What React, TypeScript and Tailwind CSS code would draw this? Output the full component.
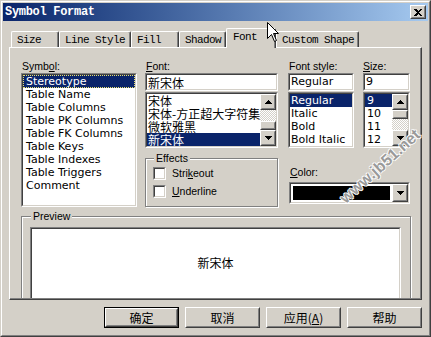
import React from "react"

const sans = "font-['Liberation_Sans',Arial,sans-serif] text-[10.5px] text-black"
const listFont = "font-['DejaVu_Sans',Verdana,sans-serif] text-[11px]"
const cjk = "font-['Noto_Sans_CJK_SC',sans-serif] text-[12px]"
const mono = "font-['Liberation_Mono',monospace]"

type BoxProps = { className?: string; inner?: string; children?: React.ReactNode }

function Sunken({ className = "", inner = "", children }: BoxProps) {
  return (
    <div className={`border border-t-[#808080] border-l-[#808080] border-r-white border-b-white ${className}`}>
      <div className={`h-full w-full border border-t-[#404040] border-l-[#404040] border-r-[#d4d0c8] border-b-[#d4d0c8] ${inner}`}>
        {children}
      </div>
    </div>
  )
}

function Raised({ className = "", inner = "", children }: BoxProps) {
  return (
    <div className={`border border-t-white border-l-white border-r-[#404040] border-b-[#404040] ${className}`}>
      <div className={`h-full w-full border border-t-[#d4d0c8] border-l-[#d4d0c8] border-r-[#808080] border-b-[#808080] ${inner}`}>
        {children}
      </div>
    </div>
  )
}

function Arrow({ up = false }: { up?: boolean }) {
  return (
    <svg width="7" height="4" viewBox="0 0 7 4" shapeRendering="crispEdges">
      {up ? (
        <g fill="#000">
          <rect x="3" y="0" width="1" height="1" />
          <rect x="2" y="1" width="3" height="1" />
          <rect x="1" y="2" width="5" height="1" />
          <rect x="0" y="3" width="7" height="1" />
        </g>
      ) : (
        <g fill="#000">
          <rect x="0" y="0" width="7" height="1" />
          <rect x="1" y="1" width="5" height="1" />
          <rect x="2" y="2" width="3" height="1" />
          <rect x="3" y="3" width="1" height="1" />
        </g>
      )}
    </svg>
  )
}

function ScrollBtn({ up = false }: { up?: boolean }) {
  return (
    <Raised className="h-[16px] w-[16px] bg-[#d4d0c8]" inner="flex items-center justify-center">
      <Arrow up={up} />
    </Raised>
  )
}

const checker =
  "bg-[image:repeating-conic-gradient(#d4d0c8_0%_25%,#ffffff_0%_50%)] [background-size:2px_2px]"

function Track({ thumbFirst, thumbH, gapH }: { thumbFirst: boolean; thumbH: string; gapH: string }) {
  const thumb = <Raised className={`${thumbH} w-[16px] bg-[#d4d0c8]`} />
  const gap = <div className={`${gapH} w-[16px] ${checker}`} />
  return (
    <div className="flex h-full w-[16px] flex-col">
      <ScrollBtn up />
      {thumbFirst ? thumb : gap}
      {thumbFirst ? gap : thumb}
      <div className="flex-1" />
      <ScrollBtn />
    </div>
  )
}

function Underline({ text, at }: { text: string; at: number }) {
  return (
    <>
      {text.slice(0, at)}
      <span className="underline underline-offset-[1px]">{text[at]}</span>
      {text.slice(at + 1)}
    </>
  )
}

const symbols = [
  "Stereotype",
  "Table Name",
  "Table Columns",
  "Table PK Columns",
  "Table FK Columns",
  "Table Keys",
  "Table Indexes",
  "Table Triggers",
  "Comment",
]

const fonts = ["宋体", "宋体-方正超大字符集", "微软雅黑", "新宋体"]
const styles = ["Regular", "Italic", "Bold", "Bold Italic"]
const sizes = ["9", "10", "11", "12"]

const tabs = [
  { label: "Size", w: "w-[48px]" },
  { label: "Line Style", w: "w-[72px]" },
  { label: "Fill", w: "w-[48px]" },
  { label: "Shadow", w: "w-[47px]" },
  { label: "Font", w: "w-[50px]", active: true },
  { label: "Custom Shape", w: "w-[83px]" },
]

const etched = "border border-[#808080] shadow-[1px_1px_0_#ffffff,inset_1px_1px_0_#ffffff]"

export default function App() {
  return (
    <div className="relative h-[337px] w-[431px] overflow-hidden bg-[#d4d0c8]">
      <div className="h-full w-full border border-t-[#d4d0c8] border-l-[#d4d0c8] border-r-[#404040] border-b-[#404040]">
        <div className="h-full w-full border border-t-white border-l-white border-r-[#808080] border-b-[#808080] p-px">
          {/* title bar */}
          <div className="flex h-[18px] items-start justify-between bg-linear-to-r from-[#0a246a] to-[#a6caf0]">
            <span className={`${mono} pl-[2px] pt-[2px] text-[12px] leading-[14px] font-bold tracking-[-0.3px] text-white`}>
              Symbol Format
            </span>
            <Raised className="mt-[2px] mr-[2px] h-[14px] w-[16px] bg-[#d4d0c8]" inner="flex items-center justify-center">
              <svg width="8" height="7" viewBox="0 0 8 7" shapeRendering="crispEdges">
                <path d="M0 0h2l2 2 2-2h2L5 3.5 8 7H6L4 5 2 7H0l3-3.5z" fill="#000" />
              </svg>
            </Raised>
          </div>

          {/* tabs */}
          <div className={`${mono} mt-[7px] ml-[8px] flex h-[19px] items-end text-[11px] tracking-[-0.6px] text-black`}>
            {tabs.map((t) =>
              t.active ? (
                <div
                  key={t.label}
                  className={`${t.w} relative z-10 -mb-px h-[20px] rounded-t-[2px] border-t border-l border-r border-t-white border-l-white border-r-[#404040] bg-[#d4d0c8] pl-[6px] leading-[16px] shadow-[inset_-1px_0_#808080]`}
                >
                  {t.label}
                </div>
              ) : (
                <div
                  key={t.label}
                  className={`${t.w} h-[16px] rounded-t-[2px] border-t border-l border-r border-t-white border-l-white border-r-[#404040] pl-[5px] leading-[16px] shadow-[inset_-1px_0_#808080]`}
                >
                  {t.label}
                </div>
              )
            )}
          </div>

          {/* panel */}
          <div className="ml-[6px] h-[253px] w-[413px] border border-t-white border-l-white border-r-[#404040] border-b-[#404040]">
            <div className="h-full w-full overflow-hidden border-r border-b border-[#808080]">
              <div className="flex pt-[11px] pl-[11px]">
                {/* symbol */}
                <div className="w-[116px]">
                  <div className={`${sans} h-[14px] pl-px leading-[14px]`}>
                    <Underline text="Symbol:" at={4} />
                  </div>
                  <Sunken className="h-[134px] w-full" inner="bg-white">
                    {symbols.map((s, i) => (
                      <div
                        key={s}
                        className={`${listFont} h-[13px] pl-[2px] leading-[12px] ${
                          i === 0
                            ? "border border-dotted border-[#e8e070] bg-[#0a246a] text-white"
                            : "border border-transparent text-black"
                        }`}
                      >
                        {s}
                      </div>
                    ))}
                  </Sunken>
                </div>

                {/* font */}
                <div className="ml-[8px] w-[133px]">
                  <div className={`${sans} h-[14px] pl-px leading-[14px]`}>
                    <Underline text="Font:" at={0} />
                  </div>
                  <Sunken className="h-[18px] w-full" inner={`bg-white ${cjk} pl-px leading-[15px] text-black`}>
                    新宋体
                  </Sunken>
                  <Sunken className="mt-px h-[56px] w-full" inner="flex bg-white">
                    <div className="min-w-0 flex-1">
                      {fonts.map((f, i) => (
                        <div
                          key={f}
                          className={`${cjk} h-[13px] overflow-hidden pl-px leading-[13px] whitespace-nowrap ${
                            i === 3 ? "bg-[#0a246a] text-white" : "text-black"
                          }`}
                        >
                          {f}
                        </div>
                      ))}
                    </div>
                    <Track thumbFirst={false} thumbH="h-[9px]" gapH="h-[11px]" />
                  </Sunken>

                  <div className={`${etched} relative mt-[10px] h-[49px] w-full`}>
                    <span className={`${sans} absolute -top-[7px] left-[8px] bg-[#d4d0c8] px-[2px] leading-[12px]`}>
                      Effects
                    </span>
                    <div className="flex items-center pt-[8px] pl-[7px]">
                      <Sunken className="h-[13px] w-[13px]" inner="bg-white" />
                      <span className={`${sans} ml-[6px] leading-[13px]`}>
                        <Underline text="Strikeout" at={4} />
                      </span>
                    </div>
                    <div className="mt-[5px] flex items-center pl-[7px]">
                      <Sunken className="h-[13px] w-[13px]" inner="bg-white" />
                      <span className={`${sans} ml-[6px] leading-[13px]`}>
                        <Underline text="Underline" at={0} />
                      </span>
                    </div>
                  </div>
                </div>

                {/* style / size / color */}
                <div className="ml-[10px] w-[122px]">
                  <div className="flex">
                    <div className="w-[66px]">
                      <div className={`${sans} h-[14px] pl-px leading-[14px]`}>Font style:</div>
                      <Sunken className="h-[18px] w-full" inner={`bg-white ${listFont} pl-[1px] leading-[14px] text-black`}>
                        Regular
                      </Sunken>
                      <Sunken className="mt-px h-[56px] w-full" inner="bg-white">
                        {styles.map((s, i) => (
                          <div
                            key={s}
                            className={`${listFont} h-[13px] pl-px leading-[13px] whitespace-nowrap ${
                              i === 0 ? "bg-[#0a246a] text-white" : "text-black"
                            }`}
                          >
                            {s}
                          </div>
                        ))}
                      </Sunken>
                    </div>
                    <div className="ml-[9px] w-[47px]">
                      <div className={`${sans} h-[14px] leading-[14px]`}>
                        <Underline text="Size:" at={0} />
                      </div>
                      <Sunken className="h-[18px] w-full" inner={`bg-white ${listFont} pl-[1px] leading-[14px] text-black`}>
                        9
                      </Sunken>
                      <Sunken className="mt-px h-[56px] w-full" inner="flex bg-white">
                        <div className="min-w-0 flex-1">
                          {sizes.map((s, i) => (
                            <div
                              key={s}
                              className={`${listFont} h-[13px] pl-[2px] leading-[13px] ${
                                i === 0 ? "bg-[#0a246a] text-white" : "text-black"
                              }`}
                            >
                              {s}
                            </div>
                          ))}
                        </div>
                        <Track thumbFirst thumbH="h-[9px]" gapH="h-[11px]" />
                      </Sunken>
                    </div>
                  </div>

                  <div className={`${sans} mt-[17px] h-[14px] pl-[2px] leading-[14px]`}>
                    <Underline text="Color:" at={0} />
                  </div>
                  <Sunken className="mt-[3px] ml-px h-[22px] w-[121px]" inner="flex bg-white">
                    <div className="flex-1 p-[2px]">
                      <div className="h-full w-full bg-black" />
                    </div>
                    <Raised className="h-full w-[16px] bg-[#d4d0c8]" inner="flex items-center justify-center">
                      <Arrow />
                    </Raised>
                  </Sunken>
                </div>
              </div>

              {/* preview */}
              <div className={`${etched} relative mt-[9px] ml-[11px] h-[120px] w-[390px]`}>
                <span className={`${sans} absolute -top-[7px] left-[9px] bg-[#d4d0c8] px-[2px] leading-[12px]`}>
                  Preview
                </span>
                <Sunken className="mt-[10px] ml-[8px] h-[90px] w-[371px]" inner={`bg-white ${cjk} pt-[26px] text-center leading-[16px] text-black`}>
                  新宋体
                </Sunken>
              </div>
            </div>
          </div>

          {/* buttons */}
          <div className={`${cjk} mt-[7px] ml-[6px] flex w-[413px] justify-end gap-[6px] text-black`}>
            <div className="h-[21px] w-[75px] border border-black">
              <Raised className="h-full w-full" inner="flex items-center justify-center leading-[14px]">
                确定
              </Raised>
            </div>
            <Raised className="h-[21px] w-[75px]" inner="flex items-center justify-center leading-[14px]">
              取消
            </Raised>
            <Raised className="h-[21px] w-[75px]" inner="flex items-center justify-center leading-[14px]">
              应用(<span className="underline">A</span>)
            </Raised>
            <Raised className="h-[21px] w-[75px]" inner="flex items-center justify-center leading-[14px]">
              帮助
            </Raised>
          </div>
        </div>
      </div>

      {/* watermark */}
      <div className="absolute top-[155px] left-[328px] z-20 w-[112px] origin-center -rotate-[42deg] font-['Liberation_Sans',sans-serif] text-[16px] leading-[16px] font-bold whitespace-nowrap text-[#9a9a9a] [text-shadow:1px_0_#fff,-1px_0_#fff,0_1px_#fff,0_-1px_#fff]">
        www.jb51.net
      </div>

      {/* mouse cursor */}
      <svg className="absolute top-[22px] left-[267px] z-30" width="13" height="21" viewBox="0 0 13 21">
        <path d="M0.5 0.5 L0.5 16.5 L4.5 12.5 L7.5 19.5 L9.5 18.5 L6.5 11.5 L11.5 11.5 Z" fill="#fff" stroke="#000" strokeWidth="1" />
      </svg>
    </div>
  )
}
